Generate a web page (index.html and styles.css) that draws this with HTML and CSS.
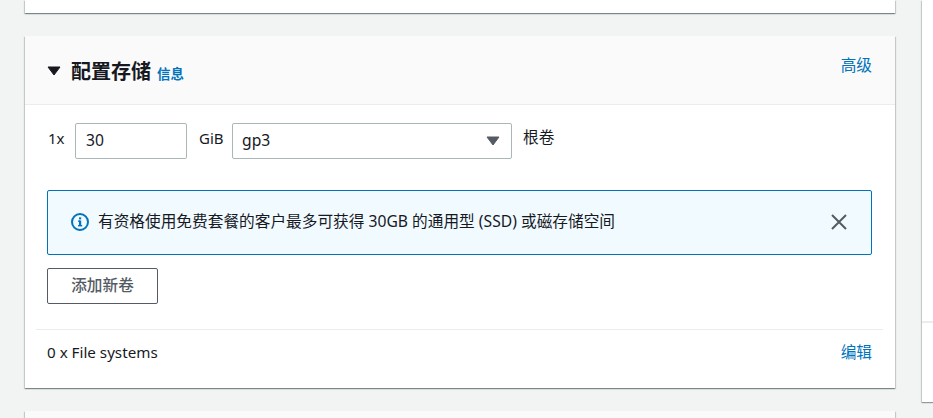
FILE: index.html
```html
<!DOCTYPE html>
<html lang="zh-CN">
<head>
<meta charset="utf-8">
<title>配置存储</title>
<link rel="stylesheet" href="styles.css">
</head>
<body>
<div class="page">
  <main class="main">
    <div class="card card-top"></div>
    <section class="card">
      <header class="head">
        <div class="head-left">
          <svg class="caret" width="14" height="10" viewBox="0 0 14 10"><path d="M1 1h12L7 9z" fill="#16191f" stroke="#16191f" stroke-linejoin="round"/></svg>
          <h2 class="title">配置存储</h2>
          <a class="info">信息</a>
        </div>
        <a class="link adv">高级</a>
      </header>
      <div class="body">
        <div class="row">
          <span class="lbl one">1x</span>
          <div class="field size">30</div>
          <span class="lbl gib">GiB</span>
          <div class="field type">gp3
            <svg class="sel" width="14" height="10" viewBox="0 0 14 10"><path d="M1 1h12L7 9z" fill="#545b64" stroke="#545b64" stroke-linejoin="round"/></svg>
          </div>
          <span class="lbl root">根卷</span>
        </div>
        <div class="alert">
          <svg class="i" width="18" height="18" viewBox="0 0 18 18"><circle cx="9" cy="9" r="8" fill="none" stroke="#0073bb" stroke-width="2"/><rect x="8" y="7.5" width="2.2" height="5.5" fill="#0073bb"/><rect x="7" y="12" width="4.2" height="1.4" fill="#0073bb"/><rect x="7" y="7.5" width="2" height="1.3" fill="#0073bb"/><rect x="8" y="4.4" width="2.2" height="2" fill="#0073bb"/></svg>
          <span class="msg">有资格使用免费套餐的客户最多可获得 30GB 的通用型 (SSD) 或磁存储空间</span>
          <svg class="x" width="16" height="16" viewBox="0 0 16 16"><path d="M1 1l14 14M15 1L1 15" stroke="#545b64" stroke-width="2" fill="none"/></svg>
        </div>
        <button class="btn">添加新卷</button>
      </div>
      <footer class="foot">
        <span class="fs">0 x File systems</span>
        <a class="link">编辑</a>
      </footer>
    </section>
    <div class="card card-next"></div>
  </main>
  <aside class="side"><div class="side-line"></div></aside>
</div>
</body>
</html>
```
FILE: styles.css
```css
* { box-sizing: border-box; }
html, body { margin: 0; height: 418px; overflow: hidden; }
body { background: #f2f3f3; font-family: "Noto Sans", "Noto Sans CJK SC", sans-serif; font-size: 15.68px; color: #16191f; }
.page { display: flex; align-items: flex-start; padding-left: 25px; gap: 27px; width: 933px; height: 418px; }
.main { width: 870px; flex: none; display: flex; flex-direction: column; gap: 23px; }
.card { background: #fff; box-shadow: 0 1px 1px 0 rgba(0,28,36,.3), 1px 1px 1px 0 rgba(0,28,36,.15), -1px 1px 1px 0 rgba(0,28,36,.15); }
.card-top { height: 13px; }
.card-next { height: 7px; background: #fafafa; }
.head { height: 69px; background: #fafafa; border-bottom: 1px solid #eaeded; display: flex; justify-content: space-between; align-items: flex-start; padding: 0 22px 0 22px; }
.head-left { display: flex; align-items: center; margin-top: 21px; height: 28px; }
.caret { margin-right: 10px; }
.title { margin: 0; font-size: 20px; font-weight: 700; line-height: 28px; font-family: "Noto Sans CJK SC", sans-serif; }
.info { color: #0073bb; font-size: 13.44px; font-weight: 700; margin-left: 6px; margin-top: 3px; font-family: "Noto Sans CJK SC", sans-serif; }
.link { color: #0073bb; font-size: 15.68px; font-family: "Noto Sans CJK SC", sans-serif; line-height: 20px; }
.adv { margin-top: 19px; margin-right: 1px; }
.body { padding: 18px 23px 0 22px; }
.row { display: flex; align-items: flex-start; height: 36px; }
.lbl { line-height: 30px; font-size: 15px; color: #16191f; }
.one { width: 17px; margin-left: 1px; }
.field { height: 36px; border: 1px solid #aab7b8; border-radius: 2px; background: #fff; line-height: 33px; padding-left: 10px; font-size: 15.68px; position: relative; }
.size { width: 112px; margin-left: 10px; }
.gib { margin-left: 12px; width: 24px; white-space: nowrap; }
.type { width: 280px; margin-left: 9px; padding-left: 9px; }
.sel { position: absolute; right: 11px; top: 12px; }
.root { margin-left: 11px; font-size: 15.68px; line-height: 28px; font-family: "Noto Sans CJK SC", sans-serif; }
.alert { margin-top: 31px; height: 65px; border: 1px solid #0073bb; border-radius: 2px; background: #f1faff; display: flex; align-items: center; padding: 0 24px 0 23px; }
.i { flex: none; margin-top: -2px; }
.msg { flex: 1; margin-left: 9px; font-size: 15.68px; line-height: 20px; margin-top: -3px; white-space: nowrap; }
.x { flex: none; margin-top: -2px; }
.btn { display: block; margin-top: 13px; width: 111px; height: 36px; border: 1px solid #545b64; border-radius: 2px; background: #fff; color: #545b64; font-family: "Noto Sans CJK SC", sans-serif; font-size: 15.68px; font-weight: 500; padding: 0 0 3px; }
.foot { margin: 25px 12px 0 11px; border-top: 1px solid #eaeded; height: 59px; display: flex; justify-content: space-between; align-items: flex-start; padding: 12px 11px 0 11px; line-height: 20px; }
.fs { font-size: 15.2px; }
.side { width: 12px; flex: none; height: 402px; background: #fff; box-shadow: 0 1px 1px 0 rgba(0,28,36,.3), -1px 1px 1px 0 rgba(0,28,36,.15); }
.side-line { height: 323px; border-bottom: 2px solid #eaeded; }
```
